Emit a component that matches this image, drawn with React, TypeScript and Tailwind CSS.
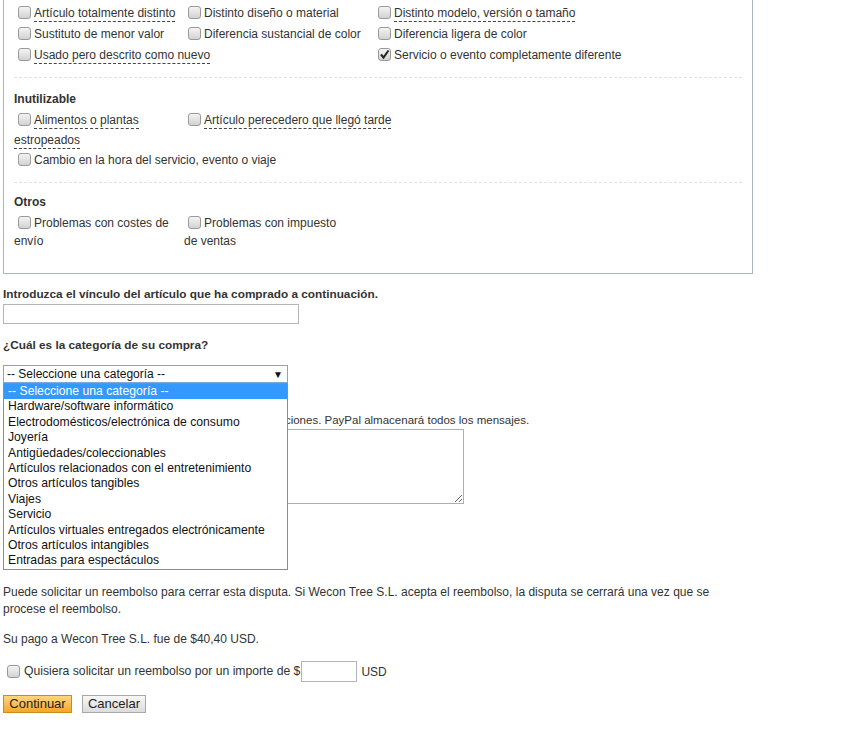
import React from "react";

function Box({ checked = false }: { checked?: boolean }) {
  return (
    <span className="relative inline-block w-[13px] h-[13px] ml-[4px] mr-[3px] align-[-2px] rounded-[3px] border border-[#9a9a9a] bg-gradient-to-b from-[#f4f4f4] to-[#d2d2d2]">
      {checked && (
        <svg viewBox="0 0 13 13" className="absolute left-[-1px] top-[-1px] w-[13px] h-[13px]">
          <path d="M3 6.5 L5.5 9.5 L10.5 2.5" fill="none" stroke="#222" strokeWidth="2" />
        </svg>
      )}
    </span>
  );
}

function Item({
  label,
  w,
  dashed = false,
  checked = false,
}: {
  label: string;
  w?: string;
  dashed?: boolean;
  checked?: boolean;
}) {
  return (
    <span className={`inline-block align-top ${w ?? ""}`}>
      <Box checked={checked} />
      <span className={dashed ? "border-b border-dashed border-[#444] pb-[1px]" : ""}>{label}</span>
    </span>
  );
}

const categories = [
  "-- Seleccione una categoría --",
  "Hardware/software informático",
  "Electrodomésticos/electrónica de consumo",
  "Joyería",
  "Antigüedades/coleccionables",
  "Artículos relacionados con el entretenimiento",
  "Otros artículos tangibles",
  "Viajes",
  "Servicio",
  "Artículos virtuales entregados electrónicamente",
  "Otros artículos intangibles",
  "Entradas para espectáculos",
];

export default function App() {
  return (
    <div className="min-h-[736px] bg-white px-[3px] text-[12px] text-[#333] font-['Liberation_Sans',Arial,sans-serif]">
      <div className="w-[750px]">
        {/* reasons box, top is scrolled off */}
        <div className="border-x border-b border-[#a9b6c2] px-[10px] pt-[3px] pb-[23px]">
          <div className="leading-[21px]">
            <div>
              <Item w="w-[170px]" label="Artículo totalmente distinto" dashed />
              <Item w="w-[190px]" label="Distinto diseño o material" />
              <Item label="Distinto modelo, versión o tamaño" dashed />
            </div>
            <div>
              <Item w="w-[170px]" label="Sustituto de menor valor" />
              <Item w="w-[190px]" label="Diferencia sustancial de color" />
              <Item label="Diferencia ligera de color" />
            </div>
            <div>
              <Item w="w-[360px]" label="Usado pero descrito como nuevo" dashed />
              <Item label="Servicio o evento completamente diferente" checked />
            </div>
          </div>

          <div className="mt-[11px] border-t border-dashed border-[#e2e2e2]" />

          <div className="mt-[12px] leading-[18px] font-bold">Inutilizable</div>
          <div className="mt-[2px] leading-[20px]">
            <div>
              <Item w="w-[170px]" label="Alimentos o plantas estropeados" dashed />
              <Item w="w-[240px]" label="Artículo perecedero que llegó tarde" dashed />
            </div>
            <div>
              <Item label="Cambio en la hora del servicio, evento o viaje" />
            </div>
          </div>

          <div className="mt-[12px] border-t border-dashed border-[#e2e2e2]" />

          <div className="mt-[10px] leading-[18px] font-bold">Otros</div>
          <div className="mt-[3px] leading-[18px]">
            <Item w="w-[170px]" label="Problemas con costes de envío" />
            <Item w="w-[160px]" label="Problemas con impuesto de ventas" />
          </div>
        </div>

        <div className="mt-[12px] leading-[16px] font-bold text-[11.8px]">
          Introduzca el vínculo del artículo que ha comprado a continuación.
        </div>
        <input
          type="text"
          className="mt-[2px] block w-[296px] h-[20px] border border-[#b5b5b5] bg-white outline-none"
        />

        <div className="mt-[13px] leading-[16px] font-bold text-[11.8px]">¿Cuál es la categoría de su compra?</div>

        <div className="relative mt-[12px] w-[285px]">
          <div className="flex h-[18px] items-center justify-between border border-[#7ea6d8] bg-white pl-[3px] pr-[4px] text-[#111]">
            <span>-- Seleccione una categoría --</span>
            <span className="text-[10px]">▼</span>
          </div>
          <ul className="absolute left-0 top-full z-10 w-[285px] border border-[#8c8c8c] bg-white text-[12.2px] text-[#111]">
            {categories.map((c, i) => (
              <li
                key={c}
                className={`h-[15.4px] leading-[15.4px] pl-[4px] whitespace-nowrap ${
                  i === 0 ? "bg-[#3399ff] text-white" : ""
                }`}
              >
                {c}
              </li>
            ))}
          </ul>
        </div>

        {/* covered by the open list */}
        <div className="mt-[14px] leading-[16px] font-bold">Describa su problema</div>
        <div className="text-[11.5px] leading-[14px]">
          Nota: no incluya información personal en sus comunicaciones. PayPal almacenará todos los mensajes.
        </div>
        <textarea className="mt-[2px] block w-[461px] h-[75px] border border-[#a9b1b5] bg-white outline-none" />
        <div className="h-[64px]" />

        <div className="mt-[16px] leading-[17px]">
          Puede solicitar un reembolso para cerrar esta disputa. Si Wecon Tree S.L. acepta el reembolso, la disputa se
          cerrará una vez que se procese el reembolso.
        </div>
        <div className="mt-[13px] leading-[17px]">Su pago a Wecon Tree S.L. fue de $40,40 USD.</div>

        <div className="mt-[13px] flex items-center">
          <Box />
          <span className="ml-[1px] text-[12.2px]">Quisiera solicitar un reembolso por un importe de $</span>
          <input type="text" className="ml-[1px] w-[56px] h-[21px] border border-[#b5b5b5] bg-white outline-none" />
          <span className="ml-[4px]">USD</span>
        </div>

        <div className="mt-[13px] flex gap-[10px]">
          <button className="h-[18px] w-[69px] border border-[#d08a18] bg-gradient-to-b from-[#ffd77e] to-[#f4a623] text-[13px] leading-[14px] text-[#222]">
            Continuar
          </button>
          <button className="h-[18px] w-[64px] border border-[#a8a8a8] bg-gradient-to-b from-[#f7f7f7] to-[#dcdcdc] text-[13px] leading-[14px] text-[#222]">
            Cancelar
          </button>
        </div>
      </div>
    </div>
  );
}
